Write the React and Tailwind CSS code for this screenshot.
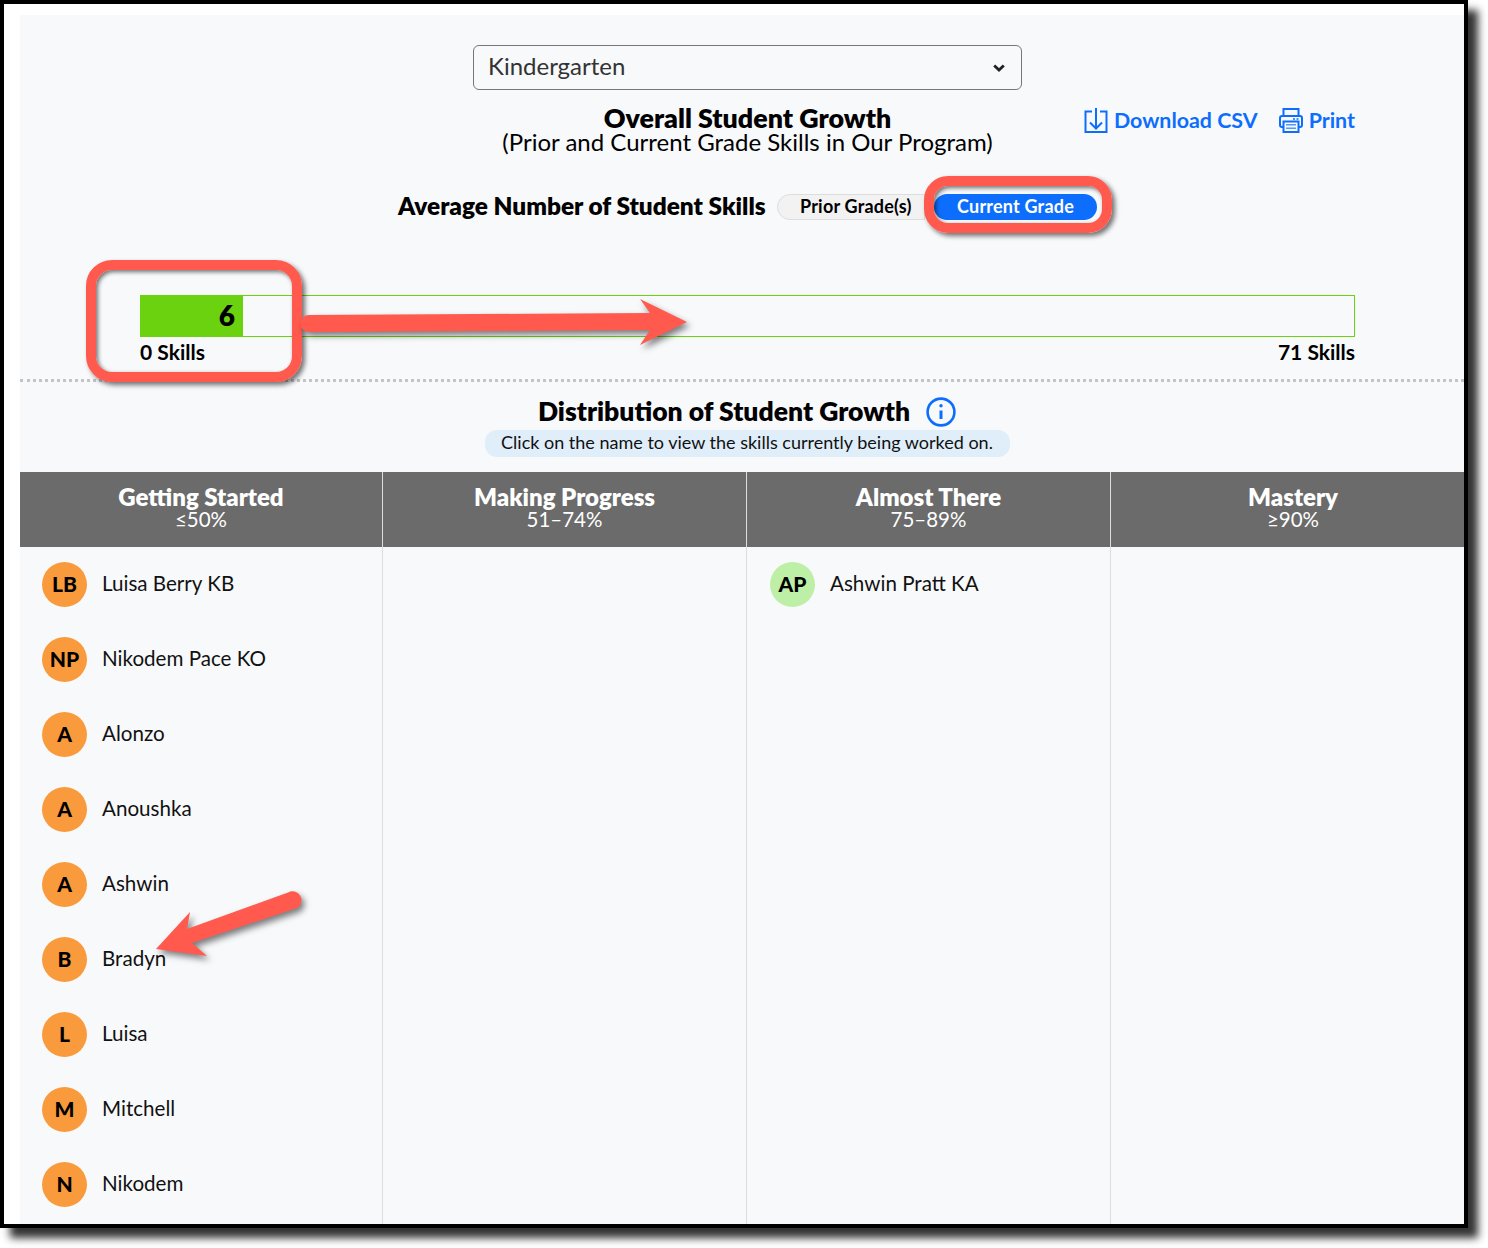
const students = [
  { initials: "LB", name: "Luisa Berry KB" },
  { initials: "NP", name: "Nikodem Pace KO" },
  { initials: "A", name: "Alonzo" },
  { initials: "A", name: "Anoushka" },
  { initials: "A", name: "Ashwin" },
  { initials: "B", name: "Bradyn" },
  { initials: "L", name: "Luisa" },
  { initials: "M", name: "Mitchell" },
  { initials: "N", name: "Nikodem" },
];

const StudentRow = ({ initials, name, avatarClass }) => (
  <div className="flex items-center gap-[15px]">
    <div className={`flex h-[45px] w-[45px] items-center justify-center rounded-full pb-[1px] text-[21px] font-black text-black ${avatarClass}`}>
      {initials}
    </div>
    <span className="pb-[3px] text-[20.6px] text-[#111]">{name}</span>
  </div>
);

const HeaderCell = ({ title, range, className }) => (
  <div className={`flex flex-col items-center justify-center bg-[#6b6b6b] pb-[6px] text-white ${className}`}>
    <p className="text-[24px] leading-[24px] font-extrabold">{title}</p>
    <p className="text-[20.5px] leading-[20px]">{range}</p>
  </div>
);

const DownloadIcon = () => (
  <svg width="24" height="25" viewBox="0 0 24 25" fill="none" stroke="#0d6efd" strokeWidth="2">
    <path d="M8 3.5H1.5V24H22.5V3.5H16" />
    <path d="M12 0V20.5M6 14.5L12 20.5L18 14.5" />
  </svg>
);

const PrintIcon = () => (
  <svg width="24" height="25" viewBox="0 0 24 25" fill="none" stroke="#0d6efd" strokeWidth="2">
    <path d="M4.5 8V1H19.5V8" />
    <path d="M4.5 19H3A2 2 0 0 1 1 17V10A2 2 0 0 1 3 8H21A2 2 0 0 1 23 10V17A2 2 0 0 1 21 19H19.5" />
    <path d="M4.5 13.5H19.5V24H4.5Z" />
    <path d="M7 16.8H17M7 20.2H17" strokeWidth="1.4" opacity="0.7" />
    <path d="M14 11H16M17.5 11H19.5" strokeWidth="1.6" />
  </svg>
);

const Annotations = () => (
  <>
    <div className="absolute left-[86px] top-[260px] h-[122px] w-[216px] rounded-[26px] border-[10px] border-[#ff5a4d] shadow-[3px_3px_5px_rgba(0,0,0,0.55),inset_2px_2px_4px_rgba(0,0,0,0.55)]" />
    <div className="absolute left-[924px] top-[176px] h-[57px] w-[188px] rounded-[24px] border-[10px] border-[#ff5a4d] shadow-[3px_3px_5px_rgba(0,0,0,0.55),inset_2px_2px_4px_rgba(0,0,0,0.55)]" />
    <svg className="absolute left-0 top-0 drop-shadow-[3px_4px_3px_rgba(0,0,0,0.5)]" width="1468" height="1228" fill="#ff5a4d">
      <path d="M309 315L650 313L640 299L687 322L640 345L650 330L309 332A8.5 8.5 0 0 1 309 315Z" />
      <path d="M187 929L288 892.5A8.5 8.5 0 0 1 297 908L192 943L207 956L156 949L190 912Z" />
    </svg>
  </>
);

export default function App() {
  return (
    <div className="relative h-[1248px] w-[1488px] overflow-hidden bg-white text-black [font-family:Lato,sans-serif]">
      <div className="h-[1228px] w-[1468px] border-4 border-black pl-4 pt-[11px] shadow-[10px_10px_8px_rgba(0,0,0,0.8)]">
        <div className="flex h-full flex-col overflow-hidden bg-[#f8f9fb]">
          <div className="pl-[120px] pr-[109px] pt-[30px]">
            <div className="mx-auto flex h-[45px] w-[549px] items-center justify-between rounded-[6px] border border-[#777] pl-[14px] pr-[16px] text-[24px] text-[#333]">
              <span className="pb-[3px]">Kindergarten</span>
              <svg width="12" height="8" viewBox="0 0 12 8" fill="none" stroke="#222" strokeWidth="2.8">
                <path d="M1.2 1.5L6 6L10.8 1.5" />
              </svg>
            </div>
            <div className="mt-[14px] grid grid-cols-[1fr_auto_1fr]">
              <div />
              <div className="text-center">
                <h1 className="text-[26.8px] leading-[28px] font-extrabold">Overall Student Growth</h1>
                <p className="-mt-[1px] text-[24px] leading-[22px]">(Prior and Current Grade Skills in Our Program)</p>
              </div>
              <div className="flex items-start justify-end gap-[21px] pt-[3px] text-[21.4px] leading-[26px] font-bold text-[#0d6efd]">
                <a className="flex items-center gap-[6px]"><DownloadIcon />Download CSV</a>
                <a className="flex items-center gap-[6px]"><PrintIcon />Print</a>
              </div>
            </div>
            <div className="mt-[41px] flex h-[26px] items-center pl-[258px]">
              <span className="w-[367px] pb-[2px] text-[24.4px] whitespace-nowrap font-extrabold">Average Number of Student Skills</span>
              <div className="ml-[12px] flex h-[26px] w-[148px] items-center rounded-l-full border border-[#ddd] bg-[#f2f2f2] pb-[2px] pl-[22px] text-[18px] font-bold tracking-[0.2px]">
                Prior Grade(s)
              </div>
              <div className="ml-[9px] flex h-[26px] w-[163px] items-center justify-center rounded-full bg-[#0d6efd] pb-[2px] text-[18px] font-bold tracking-[0.2px] text-white">
                Current Grade
              </div>
            </div>
            <div className="mt-[75px] h-[42px] border border-[#6bd20f]">
              <div className="flex h-full w-[102px] items-center justify-end bg-[#6bd20f] pb-[2px] pr-[8px] text-[28px] font-extrabold">6</div>
            </div>
            <div className="mt-[2px] flex justify-between text-[21px] leading-[26px] font-bold">
              <span>0 Skills</span>
              <span>71 Skills</span>
            </div>
          </div>
          <div className="mt-[14px] border-t-[3px] border-dotted border-[#c4c4c4]" />
          <div className="mt-[14px] flex items-center justify-center gap-[16px] pl-[10px]">
            <h2 className="pb-[2px] text-[26.5px] leading-[30px] whitespace-nowrap font-extrabold">Distribution of Student Growth</h2>
            <svg width="30" height="30" viewBox="0 0 30 30" fill="none" stroke="#0d6efd" strokeWidth="2.6">
              <circle cx="15" cy="15" r="13.4" />
              <path d="M15 13.5V22" strokeWidth="3" />
              <circle cx="15" cy="8.8" r="1.7" fill="#0d6efd" stroke="none" />
            </svg>
          </div>
          <div className="mx-auto mt-[2px] flex h-[27px] w-[525px] translate-x-[5px] items-center justify-center rounded-[12px] bg-[#e0eefa] pb-[2px] text-[18px] text-[#111]">
            Click on the name to view the skills currently being worked on.
          </div>
          <div className="mt-[15px] grid h-[75px] shrink-0 grid-cols-[363px_364px_364px_364px]">
            <HeaderCell title="Getting Started" range="≤50%" className="border-r border-[#ddd]" />
            <HeaderCell title="Making Progress" range="51–74%" className="border-r border-[#ddd]" />
            <HeaderCell title="Almost There" range="75–89%" className="border-r border-[#ddd]" />
            <HeaderCell title="Mastery" range="≥90%" />
          </div>
          <div className="grid flex-1 grid-cols-[363px_364px_364px_364px]">
            <div className="flex flex-col gap-[30px] border-r border-[#ddd] pl-[22px] pt-[15px]">
              {students.map((s) => (
                <StudentRow key={s.name} initials={s.initials} name={s.name} avatarClass="bg-[#f99b3c]" />
              ))}
            </div>
            <div className="border-r border-[#ddd]" />
            <div className="border-r border-[#ddd] pl-[23px] pt-[15px]">
              <StudentRow initials="AP" name="Ashwin Pratt KA" avatarClass="bg-[#bdefa6]" />
            </div>
            <div />
          </div>
        </div>
      </div>
      <Annotations />
    </div>
  );
}
